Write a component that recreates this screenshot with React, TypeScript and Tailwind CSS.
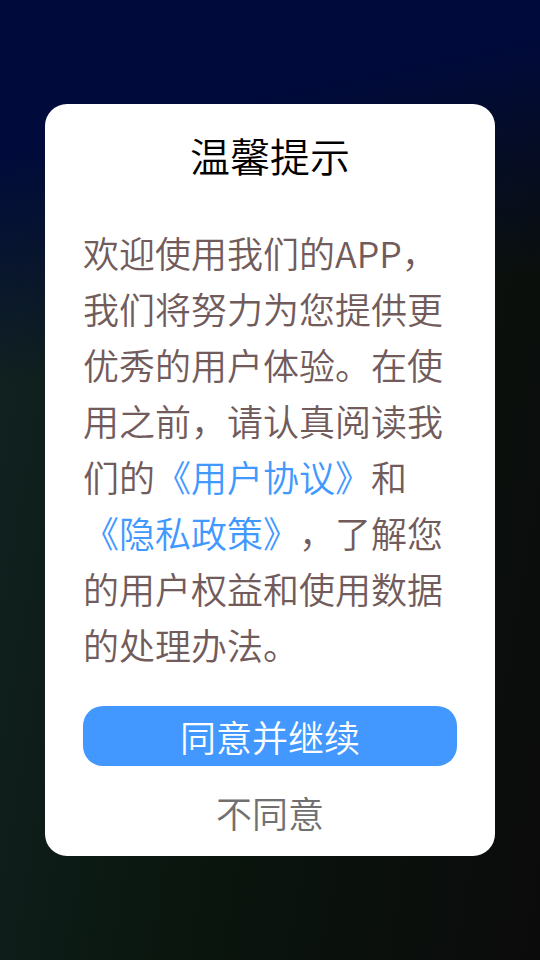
import React from "react";

export default function App() {
  return (
    <div
      className="w-[540px] h-[960px] flex items-center justify-center bg-[linear-gradient(168deg,#000a3b_0%,#000a3b_14%,rgba(0,10,59,0)_36%),linear-gradient(100deg,#122424_0%,#0a160e_48%,#0b0b0b_100%)] [text-spacing-trim:space-all]"
      style={{ fontFamily: '"Noto Sans CJK SC", "Noto Sans", sans-serif' }}
    >
      <div className="w-[450px] bg-white rounded-[22px] px-[38px] pt-[23px] pb-[16px] flex flex-col font-[350]">
        <div className="text-[40px] leading-[56px] text-black text-center">温馨提示</div>
        <p className="mt-[41px] text-[36px] leading-[56px] text-[#725b5b]">
          欢迎使用我们的APP，我们将努力为您提供更优秀的用户体验。在使用之前，请认真阅读我们的
          <span className="text-[#4198ff]">《用户协议》</span>和
          <span className="text-[#4198ff]">《隐私政策》</span>，了解您的用户权益和使用数据的处理办法。
        </p>
        <button className="mt-[34px] h-[60px] w-full rounded-[20px] bg-[#4298ff] text-white text-[36px] leading-[60px] font-[350]">
          同意并继续
        </button>
        <button className="mt-[18px] text-[36px] leading-[56px] text-[#707070] text-center font-[350]">不同意</button>
      </div>
    </div>
  );
}
